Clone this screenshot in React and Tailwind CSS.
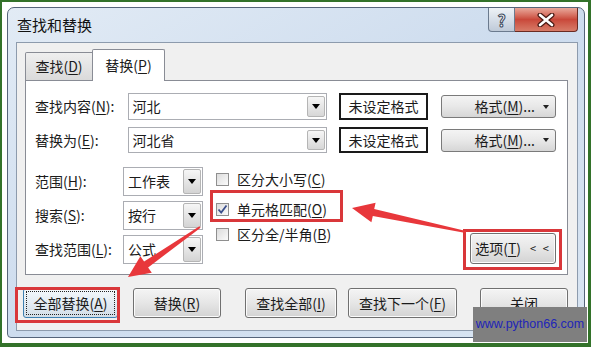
import React from "react";

const U = ({ children }) => (
  <span className="underline underline-offset-[2px] decoration-1">{children}</span>
);

const Tri = () => (
  <svg width="8" height="5" viewBox="0 0 8 5">
    <path d="M0 0h8L4 5z" fill="#000" />
  </svg>
);

function ComboInput({ value, h }) {
  return (
    <div className={"w-[200px] border border-[#abadb3] bg-white flex items-stretch " + h}>
      <div className="flex-1 pl-[4px] flex items-center text-[14px]">{value}</div>
      <div className="w-[18px] my-[2px] mr-[1px] border border-[#b5b5b5] rounded-[2px] bg-linear-to-b from-[#f6f6f6] to-[#d7d7d7] flex items-center justify-center">
        <Tri />
      </div>
    </div>
  );
}

function Select({ value }) {
  return (
    <div className="w-[80px] h-[29px] border border-[#abadb3] bg-white flex items-stretch">
      <div className="flex-1 pl-[4px] flex items-center text-[14px]">{value}</div>
      <div className="w-[18px] my-[1px] mr-[1px] border border-[#b5b5b5] rounded-[2px] bg-linear-to-b from-[#f6f6f6] to-[#d4d4d4] flex items-center justify-center">
        <Tri />
      </div>
    </div>
  );
}

function Check({ checked, children, className }) {
  return (
    <div className={"flex items-center h-[18px] gap-[8px] text-[14px] " + className}>
      <div className="w-[13px] h-[13px] border border-[#8f8f8f] bg-linear-to-br from-[#dcdcdc] to-[#fbfbfb] flex items-center justify-center">
        {checked && (
          <svg width="11" height="11" viewBox="0 0 11 11">
            <path d="M1.5 5.5L4.2 8.5L9.5 1.5" fill="none" stroke="#3b4f8c" strokeWidth="1.8" />
          </svg>
        )}
      </div>
      <span>{children}</span>
    </div>
  );
}

function Btn({ children, className }) {
  return (
    <div
      className={
        "h-[30px] rounded-[3px] border border-[#707070] bg-linear-to-b from-[#f4f4f4] via-[#e6e6e6] to-[#d3d3d3] flex items-center justify-center text-[14px] shadow-[inset_0_0_0_1px_#fbfbfb] " +
        className
      }
    >
      {children}
    </div>
  );
}

function FieldRow({ label, value, h }) {
  return (
    <div className={"flex items-center " + h}>
      <div className="w-[93px] text-[14px]">{label}</div>
      <ComboInput value={value} h={h} />
      <div className={"ml-[12px] w-[90px] border-2 border-[#1a1a1a] bg-white flex items-center justify-center text-[14px] " + h}>
        未设定格式
      </div>
      <div className="ml-[13px] w-[115px] h-[23px] rounded-[3px] border border-[#7a7a7a] bg-linear-to-b from-[#f4f4f4] via-[#e8e8e8] to-[#d6d6d6] flex items-center justify-end pr-[6px] gap-[8px] text-[14px]">
        <span>
          格式(<U>M</U>)...
        </span>
        <svg width="6" height="4" viewBox="0 0 6 4">
          <path d="M0 0h6L3 4z" fill="#222" />
        </svg>
      </div>
    </div>
  );
}

export default function App() {
  return (
    <div className="relative w-[591px] h-[347px] bg-white border-t-2 border-l-2 border-r-[3px] border-b-[4px] border-[#33722a] pt-[5px] pl-[5px] overflow-hidden font-['Noto_Sans_CJK_SC','Noto_Sans',sans-serif] text-[#1b1b1b]">
      {/* window */}
      <div className="w-[578px] h-[331px] rounded-t-[7px] rounded-b-[4px] border border-[#55647a] bg-linear-to-br from-[#e2ebf5] via-[#cddcee] to-[#d9e5f2] flex flex-col">
        <div className="h-[34px] flex items-center pl-[9px]">
          <span className="text-[15px] text-[#111]">查找和替换</span>
          <div className="ml-auto self-start flex mr-[6px]">
            <div className="w-[27px] h-[24px] rounded-bl-[4px] border border-t-0 border-[#6b7a8e] bg-linear-to-b from-[#eef2f6] via-[#d6dee8] to-[#bfcad8] flex items-center justify-center">
              <span className="text-[16px] font-bold leading-none text-[#f4f6f8] [-webkit-text-stroke:1px_#3d4a5c]">?</span>
            </div>
            <div className="w-[63px] h-[24px] rounded-br-[4px] border border-t-0 border-l-0 border-[#6a2b22] bg-linear-to-b from-[#e8a89c] via-[#c9483a] to-[#d77b68] flex items-center justify-center">
              <svg width="20" height="14" viewBox="0 0 20 14">
                <path d="M4 2L16 12M16 2L4 12" stroke="#4a1a14" strokeWidth="5" strokeLinecap="round" />
                <path d="M4 2L16 12M16 2L4 12" stroke="#ffffff" strokeWidth="2.6" strokeLinecap="round" />
              </svg>
            </div>
          </div>
        </div>

        {/* client area */}
        <div className="ml-[8px] mr-[6px] h-[289px] border border-[#8d9bad] bg-[#f0f0f0] flex flex-col">
          <div className="flex items-end ml-[8px] mt-[6px] -mb-[1px] relative z-10">
            <div className="w-[68px] h-[28px] mb-[1px] border border-b-0 border-[#898c95] rounded-tl-[2px] bg-linear-to-b from-[#efefef] to-[#dadada] flex items-center justify-center text-[14px]">
              查找(<U>D</U>)
            </div>
            <div className="w-[73px] h-[32px] -ml-[1px] border border-b-0 border-[#898c95] rounded-t-[2px] bg-white flex items-center justify-center text-[14px]">
              替换(<U>P</U>)
            </div>
          </div>

          <div className="ml-[8px] w-[543px] h-[195px] border border-[#898c95] bg-white pl-[9px] pr-[11px] pt-[12px] pb-[9px] flex flex-col">
            <FieldRow
              label={<>查找内容(<U>N</U>):</>}
              value="河北"
              h="h-[27px]"
            />
            <div className="mt-[7px]">
              <FieldRow
                label={<>替换为(<U>E</U>):</>}
                value="河北省"
                h="h-[26px]"
              />
            </div>

            <div className="flex mt-[14px]">
              <div className="flex flex-col gap-[5px]">
                <div className="flex items-center">
                  <div className="w-[88px] text-[14px]">范围(<U>H</U>):</div>
                  <Select value="工作表" />
                </div>
                <div className="flex items-center">
                  <div className="w-[88px] text-[14px]">搜索(<U>S</U>):</div>
                  <Select value="按行" />
                </div>
                <div className="flex items-center">
                  <div className="w-[88px] text-[14px]">查找范围(<U>L</U>):</div>
                  <Select value="公式" />
                </div>
              </div>
              <div className="flex flex-col ml-[13px] pt-[3px]">
                <Check>区分大小写(<U>C</U>)</Check>
                <Check checked className="mt-[12px]">单元格匹配(<U>O</U>)</Check>
                <Check className="mt-[7px]">区分全/半角(<U>B</U>)</Check>
              </div>
              <div className="ml-auto self-end">
                <Btn className="w-[86px] h-[31px] gap-[9px]">
                  <span>
                    选项(<U>T</U>)
                  </span>
                  <span className="text-[11px] tracking-[2px]">&lt; &lt;</span>
                </Btn>
              </div>
            </div>
          </div>

          <div className="flex mt-[13px] pl-[6px]">
            <div className="w-[95px] h-[30px] rounded-[3px] border border-[#3c7fb1] bg-linear-to-b from-[#f4f8fb] via-[#e4ecf3] to-[#d2dde7] p-[2px]">
              <div className="w-full h-full border border-dotted border-[#222] flex items-center justify-center text-[14px]">
                全部替换(<U>A</U>)
              </div>
            </div>
            <Btn className="ml-[15px] w-[88px]">
              替换(<U>R</U>)
            </Btn>
            <Btn className="ml-[24px] w-[92px]">
              查找全部(<U>I</U>)
            </Btn>
            <Btn className="ml-[11px] w-[109px]">
              查找下一个(<U>F</U>)
            </Btn>
            <Btn className="ml-[23px] w-[88px]">关闭</Btn>
          </div>
        </div>
      </div>

      {/* annotations */}
      <div className="absolute left-[208px] top-[188px] w-[133px] h-[32px] border-[3px] border-[#d9373a]" />
      <div className="absolute left-[461px] top-[227px] w-[99px] h-[41px] border-[3px] border-[#d9373a]" />
      <div className="absolute left-[13px] top-[285px] w-[105px] h-[36px] border-[3px] border-[#d9373a]" />
      <svg className="absolute -left-[2px] -top-[2px]" width="591" height="347" viewBox="0 0 591 347">
        <polygon
          points="466,231 374.2,209.1 375.6,202.7 352,208 371.4,222.3 372.8,215.9 465.8,233"
          fill="#e8373b"
        />
        <polygon
          points="200.6,227.8 148.1,267.4 151.8,272.7 128,277 140.4,256.3 144.1,261.6 199.4,226.2"
          fill="#e8373b"
        />
      </svg>

      {/* watermark */}
      <div className="absolute left-[471px] top-[305px] w-[114px] h-[35px] bg-[#7f7f7f] flex items-center justify-center font-['Liberation_Sans',sans-serif] text-[12.5px] text-[#2125b8]">
        www.python66.com
      </div>
    </div>
  );
}
